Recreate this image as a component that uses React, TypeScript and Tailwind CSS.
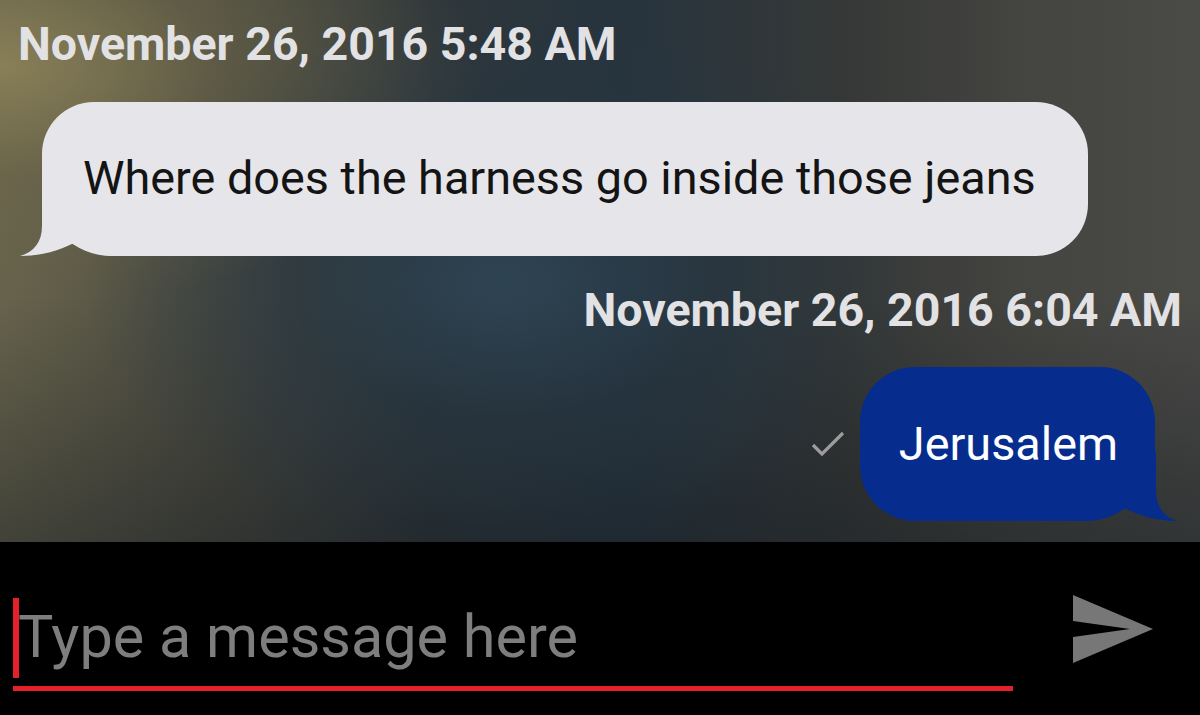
import React from "react";

const font = "font-['Roboto','Liberation_Sans',sans-serif]";

function Timestamp({ text, align }: { text: string; align: "left" | "right" }) {
  return (
    <div
      className={`${font} text-[46.5px] font-bold leading-none text-[#e2e2e4] ${
        align === "left" ? "pl-[18px] text-left" : "pr-[18px] text-right"
      }`}
    >
      {text}
    </div>
  );
}

// bubble tail drawn in the bubble's own colour, tucked under one bottom corner
function Tail({ color, side }: { color: string; side: "left" | "right" }) {
  return (
    <svg
      width="92"
      height="70"
      viewBox="0 0 92 70"
      className={`absolute bottom-0 ${side === "left" ? "-left-[22px]" : "-right-[23px] -scale-x-100"}`}
    >
      <path
        d="M22 0 L22 40 C22 56 14 66 0 70 C22 70 40 64 54 57 C64 64 74 68 92 70 L92 0 Z"
        fill={color}
      />
    </svg>
  );
}

function IncomingBubble({ text }: { text: string }) {
  return (
    <div className="ml-[42px] flex">
      <div className="relative flex h-[154px] items-center rounded-[52px] rounded-bl-[70px] bg-[#e6e6ea] pl-[41px] pr-[52px]">
        <Tail color="#e6e6ea" side="left" />
        <span className={`${font} relative text-[46.8px] leading-none text-[#141414]`}>{text}</span>
      </div>
    </div>
  );
}

function OutgoingBubble({ text }: { text: string }) {
  return (
    <div className="mr-[45px] flex items-center justify-end gap-[15px]">
      <svg width="34" height="26" viewBox="0 0 34 26" fill="none">
        <path d="M2 14 L11 23 L32 2" stroke="#9c9c9c" strokeWidth="3.2" />
      </svg>
      <div className="relative flex h-[154px] items-center rounded-[55px] rounded-br-[70px] bg-[#062d8e] pl-[39px] pr-[37px]">
        <Tail color="#062d8e" side="right" />
        <span className={`${font} relative text-[46.8px] leading-none text-white`}>{text}</span>
      </div>
    </div>
  );
}

function Composer() {
  return (
    <div className="flex h-[173px] items-start bg-black pl-[13px] pt-[53px]">
      <div className="mt-[3px] flex w-[1000px] flex-col">
        <div className="flex h-[80px] items-center">
          <div className="h-[80px] w-[6px] bg-[#e4202a]" />
          <span className={`${font} -ml-[1px] text-[59.4px] leading-none text-[#7e7e7e]`}>
            Type a message here
          </span>
        </div>
        <div className="mt-[8px] h-[5px] w-full bg-[#e4202a]" />
      </div>
      <svg width="80" height="68" viewBox="0 0 80 68" className="ml-[60px]">
        <polygon points="0,0 80,34 0,68 0,42 57,34 0,26" fill="#777777" />
      </svg>
    </div>
  );
}

export default function App() {
  return (
    <div className="flex h-[715px] w-[1200px] flex-col overflow-hidden bg-black">
      <div className="h-[542px] bg-[radial-gradient(ellipse_40%_45%_at_0%_12%,rgba(140,130,88,0.9)_0%,rgba(110,104,74,0.5)_45%,transparent_100%),radial-gradient(ellipse_35%_50%_at_42%_52%,rgba(46,68,84,0.95)_0%,rgba(38,54,66,0.6)_50%,transparent_100%),linear-gradient(180deg,transparent_55%,rgba(20,26,32,0.45)_100%),linear-gradient(90deg,#67634c_0%,#4c4b40_18%,#2e363a_36%,#27343e_52%,#353837_70%,#444440_85%,#4a4a47_100%)] pt-[21px]">
        <Timestamp text="November 26, 2016 5:48 AM" align="left" />
        <div className="mt-[34px]">
          <IncomingBubble text="Where does the harness go inside those jeans" />
        </div>
        <div className="mt-[31px]">
          <Timestamp text="November 26, 2016 6:04 AM" align="right" />
        </div>
        <div className="mt-[34px]">
          <OutgoingBubble text="Jerusalem" />
        </div>
      </div>
      <Composer />
    </div>
  );
}
